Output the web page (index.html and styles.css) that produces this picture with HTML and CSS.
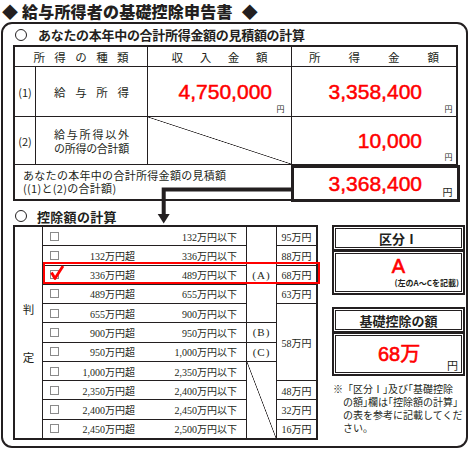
FILE: index.html
```html
<!DOCTYPE html>
<html lang="ja">
<head>
<meta charset="utf-8">
<link rel="stylesheet" href="styles.css">
</head>
<body>
<h1 class="title"><span class="dia">◆</span>給与所得者の基礎控除申告書<span class="dia dia-r">◆</span></h1>
<div class="frame">
  <h2 class="sec sec1"><span class="circ"></span>あなたの本年中の合計所得金額の見積額の計算</h2>
  <div class="t1">
    <div class="th span2"><span class="sp1">所得の種類</span></div>
    <div class="th"><span class="sp2">収入金額</span></div>
    <div class="th"><span class="sp3">所得金額</span></div>
    <div class="no">(1)</div>
    <div class="kind"><span class="sp4">給与所得</span></div>
    <div class="amt a3"><span class="num">4,750,000</span><span class="yen">円</span></div>
    <div class="amt a4"><span class="num">3,358,400</span><span class="yen">円</span></div>
    <div class="no">(2)</div>
    <div class="kind kind2"><span class="l1">給与所得以外</span><span class="l2">の所得の合計額</span></div>
    <div class="diag"></div>
    <div class="amt a4"><span class="num">10,000</span><span class="yen">円</span></div>
    <div class="totlabel"><span>あなたの本年中の合計所得金額の見積額<br>((1)と(2)の合計額)</span></div>
    <div class="amt total"><span class="num">3,368,400</span><span class="yen">円</span></div>
  </div>
  <h2 class="sec sec2"><span class="circ"></span>控除額の計算</h2>
  <div class="lower">
    <div class="t2">
      <div class="judge"><span>判</span><span>定</span></div>
      <div class="main"><span class="cb"></span><span class="lo"></span><span class="hi">132万円以下</span></div>
      <div class="abc ra">(A)</div>
      <div class="ded">95万円</div>
      <div class="main"><span class="cb"></span><span class="lo">132万円超</span><span class="hi">336万円以下</span></div>
      <div class="ded">88万円</div>
      <div class="main"><span class="cb"><svg class="check" viewBox="0 0 14 15"><path d="M1.5 7.5 L5 13.5 L13 1" fill="none" stroke="#ff0000" stroke-width="2.8" stroke-linejoin="round"/></svg></span><span class="lo">336万円超</span><span class="hi">489万円以下</span></div>
      <div class="ded">68万円</div>
      <div class="main"><span class="cb"></span><span class="lo">489万円超</span><span class="hi">655万円以下</span></div>
      <div class="ded">63万円</div>
      <div class="main"><span class="cb"></span><span class="lo">655万円超</span><span class="hi">900万円以下</span></div>
      <div class="ded rs4">58万円</div>
      <div class="main"><span class="cb"></span><span class="lo">900万円超</span><span class="hi">950万円以下</span></div>
      <div class="abc">(B)</div>
      <div class="main"><span class="cb"></span><span class="lo">950万円超</span><span class="hi">1,000万円以下</span></div>
      <div class="abc">(C)</div>
      <div class="main"><span class="cb"></span><span class="lo">1,000万円超</span><span class="hi">2,350万円以下</span></div>
      <div class="abc rs4 diag"></div>
      <div class="main"><span class="cb"></span><span class="lo">2,350万円超</span><span class="hi">2,400万円以下</span></div>
      <div class="ded">48万円</div>
      <div class="main"><span class="cb"></span><span class="lo">2,400万円超</span><span class="hi">2,450万円以下</span></div>
      <div class="ded">32万円</div>
      <div class="main"><span class="cb"></span><span class="lo">2,450万円超</span><span class="hi">2,500万円以下</span></div>
      <div class="ded">16万円</div>
    </div>
    <div class="side">
      <div class="box">
        <div class="hd">区分Ⅰ</div>
        <div class="val1"><span class="big">A</span><span class="hint">(左のA〜Cを記載)</span></div>
      </div>
      <div class="box box2">
        <div class="hd hd2">基礎控除の額</div>
        <div class="val2"><span class="big">68万</span><span class="yen2">円</span></div>
      </div>
      <p class="note"><span class="kome">※</span><span class="h">「</span>区分Ⅰ<span class="h">」</span>及び<span class="h">「</span>基礎控除<br>の額<span class="h">」</span>欄は<span class="h">「</span>控除額の計算<span class="h">」</span><br>の表を参考に記載してくだ<br>さい。</p>
    </div>
    <div class="redbox"></div>
  </div>
  <svg class="arrow" viewBox="0 0 142 42" width="142" height="42">
    <path d="M139 5.5 H10.7 V31" fill="none" stroke="#231f20" stroke-width="4"/>
    <polygon points="4.7,30 16.7,30 10.7,39.5" fill="#231f20"/>
  </svg>
</div>
</body>
</html>
```

FILE: styles.css
```css
* { box-sizing: border-box; margin: 0; padding: 0; }
html, body { background: #fff; }
body {
  width: 471px;
  height: 453px;
  overflow: hidden;
  color: #231f20;
  font-family: "Noto Sans CJK JP", "Noto Sans", sans-serif;
}

.title {
  height: 22px;
  padding-left: 2px;
  font-size: 16px;
  line-height: 22px;
  font-weight: 900;
  letter-spacing: 0.2px;
  white-space: nowrap;
}
.dia { margin-right: 4px; letter-spacing: 0; }
.dia-r { margin-left: 9px; margin-right: 0; }

.frame {
  position: relative;
  width: 467px;
  height: 426px;
  margin-left: 1px;
  border: 2px solid #231f20;
  border-radius: 11px;
  padding: 0 1px 0 10px;
}

.sec {
  display: flex;
  align-items: center;
  height: 21px;
  font-size: 13px;
  font-weight: 700;
  white-space: nowrap;
  letter-spacing: -0.3px;
}
.circ {
  flex: none;
  width: 12px;
  height: 12px;
  border: 1.3px solid #231f20;
  border-radius: 50%;
  margin: 0 11px 0 2px;
}
.sec2 { height: 24px; padding-top: 6px; letter-spacing: 0.3px; }
.sec2 .circ { margin-right: 10px; }

/* table 1 */
.t1 {
  display: grid;
  width: 445px;
  grid-template-columns: 20px 111px 143px 164px;
  grid-template-rows: 19px 49px 47px 34px;
  gap: 1px;
  background: #231f20;
  border: 2px solid #231f20;
  font-size: 11.5px;
}
.t1 > div {
  background: #fff;
  display: flex;
  align-items: center;
  justify-content: center;
  min-width: 0;
}
.span2 { grid-column: span 2; }
.sp1 { letter-spacing: 9.4px; margin-right: -9.4px; }
.sp2 { letter-spacing: 16.7px; margin-right: -16.7px; }
.sp3 { letter-spacing: 28px; margin-right: -28px; }
.sp4 { letter-spacing: 9.7px; margin-right: -9.7px; }
.no { font-size: 11px; }
.kind2 { flex-direction: column; font-size: 11px; line-height: 14px; }
.l1 { letter-spacing: 1.8px; margin-right: -1.8px; }
.l2 { letter-spacing: -0.3px; }
.t1 .diag, .t2 .diag {
  background: linear-gradient(to top right, #fff calc(50% - 0.7px), #231f20 50%, #fff calc(50% + 0.7px));
}
.t1 .amt { justify-content: flex-end; }
.num {
  font-family: "Liberation Sans", Arial, sans-serif;
  font-size: 21px;
  font-weight: 400;
  line-height: 1;
  color: #ff0000;
  -webkit-text-stroke: 0.5px #ff0000;
}
.yen { font-size: 8px; line-height: 1; align-self: flex-end; margin-bottom: 3px; }
.a3 { padding-right: 6.5px; }
.a3 .yen { margin-left: 4.5px; }
.a4 { padding-right: 3.5px; }
.a4 .num { margin-right: 22.5px; }
.t1 .totlabel {
  grid-column: span 3;
  justify-content: flex-start;
  padding-left: 8px;
  font-size: 11px;
  line-height: 13px;
  letter-spacing: 0.3px;
}
.t1 .total {
  position: relative;
  z-index: 1;
  margin: 0 -4px -3px -1px;
  border: 3px solid #231f20;
  padding-right: 4.5px;
}
.total .num { margin-right: 20.5px; }
.total .yen { font-size: 10px; margin-bottom: 2px; }

/* lower section */
.lower {
  position: relative;
  display: flex;
  gap: 14px;
  align-items: flex-start;
}
.t2 {
  flex: none;
  display: grid;
  width: 305px;
  height: 215px;
  grid-template-columns: 27px 203px 29px 39px;
  grid-template-rows: repeat(11, 1fr);
  gap: 1px;
  background: #231f20;
  border: 2px solid #231f20;
  font-family: "Liberation Serif", "Noto Sans CJK JP", serif;
  font-size: 10px;
}
.t2 > div {
  background: #fff;
  display: flex;
  align-items: center;
  justify-content: center;
  white-space: nowrap;
}
.t2 .judge {
  grid-column: 1;
  grid-row: 1 / span 11;
  flex-direction: column;
  gap: 36px;
  padding-top: 2px;
  font-family: "Noto Sans CJK JP", sans-serif;
  font-size: 11.5px;
  line-height: 1;
}
.t2 .main { grid-column: 2; justify-content: flex-start; padding-right: 9px; }
.cb {
  position: relative;
  flex: none;
  width: 9px;
  height: 9px;
  border: 1px solid #8a8a8a;
  margin-left: 7px;
}
.lo { width: 76px; text-align: right; }
.hi { flex: 1; text-align: right; }
.abc { grid-column: 3; font-size: 11px; letter-spacing: 1px; }
.ra { grid-row: span 5; }
.ded { grid-column: 4; }
.rs4 { grid-row: span 4; }
.check {
  position: absolute;
  left: -1px;
  top: -6px;
  width: 14px;
  height: 15px;
  overflow: visible;
}
.redbox {
  position: absolute;
  left: 30px;
  top: 37px;
  width: 277px;
  height: 22px;
  border: 2.5px solid #ff0000;
}

/* side panel */
.side { flex: none; width: 133px; display: flex; flex-direction: column; }
.box {
  display: flex;
  flex-direction: column;
  gap: 3px;
  padding: 2px;
  background: #231f20;
}
.box > div {
  background: #fff;
  box-shadow: inset 0 0 0 1px #fff, inset 0 0 0 2px #231f20;
}
.hd {
  height: 22px;
  display: flex;
  align-items: center;
  justify-content: center;
  font-weight: 700;
  font-size: 13px;
}
.val1 {
  height: 41px;
  display: flex;
  flex-direction: column;
  align-items: center;
  padding-top: 4px;
}
.big {
  font-family: "Liberation Sans", "Noto Sans CJK JP", sans-serif;
  color: #ff0000;
  font-size: 20px;
  font-weight: 400;
  line-height: 20px;
  -webkit-text-stroke: 0.6px #ff0000;
}
.hint {
  align-self: flex-end;
  font-size: 8px;
  font-weight: 700;
  line-height: 10px;
  margin: 2px 4px 0 0;
}
.box2 { margin-top: 12px; }
.val2 {
  height: 40px;
  display: flex;
  align-items: center;
  padding-left: 44px;
}
.yen2 {
  align-self: flex-end;
  font-size: 11px;
  line-height: 11px;
  margin: 0 5px 3px auto;
}
.note {
  margin-top: 6px;
  padding-left: 11px;
  text-indent: -10px;
  font-size: 10px;
  line-height: 13px;
  white-space: nowrap;
}
.kome { margin-right: 5px; }
.h { font-feature-settings: "halt"; }

.arrow {
  position: absolute;
  left: 150px;
  top: 160px;
}
```
